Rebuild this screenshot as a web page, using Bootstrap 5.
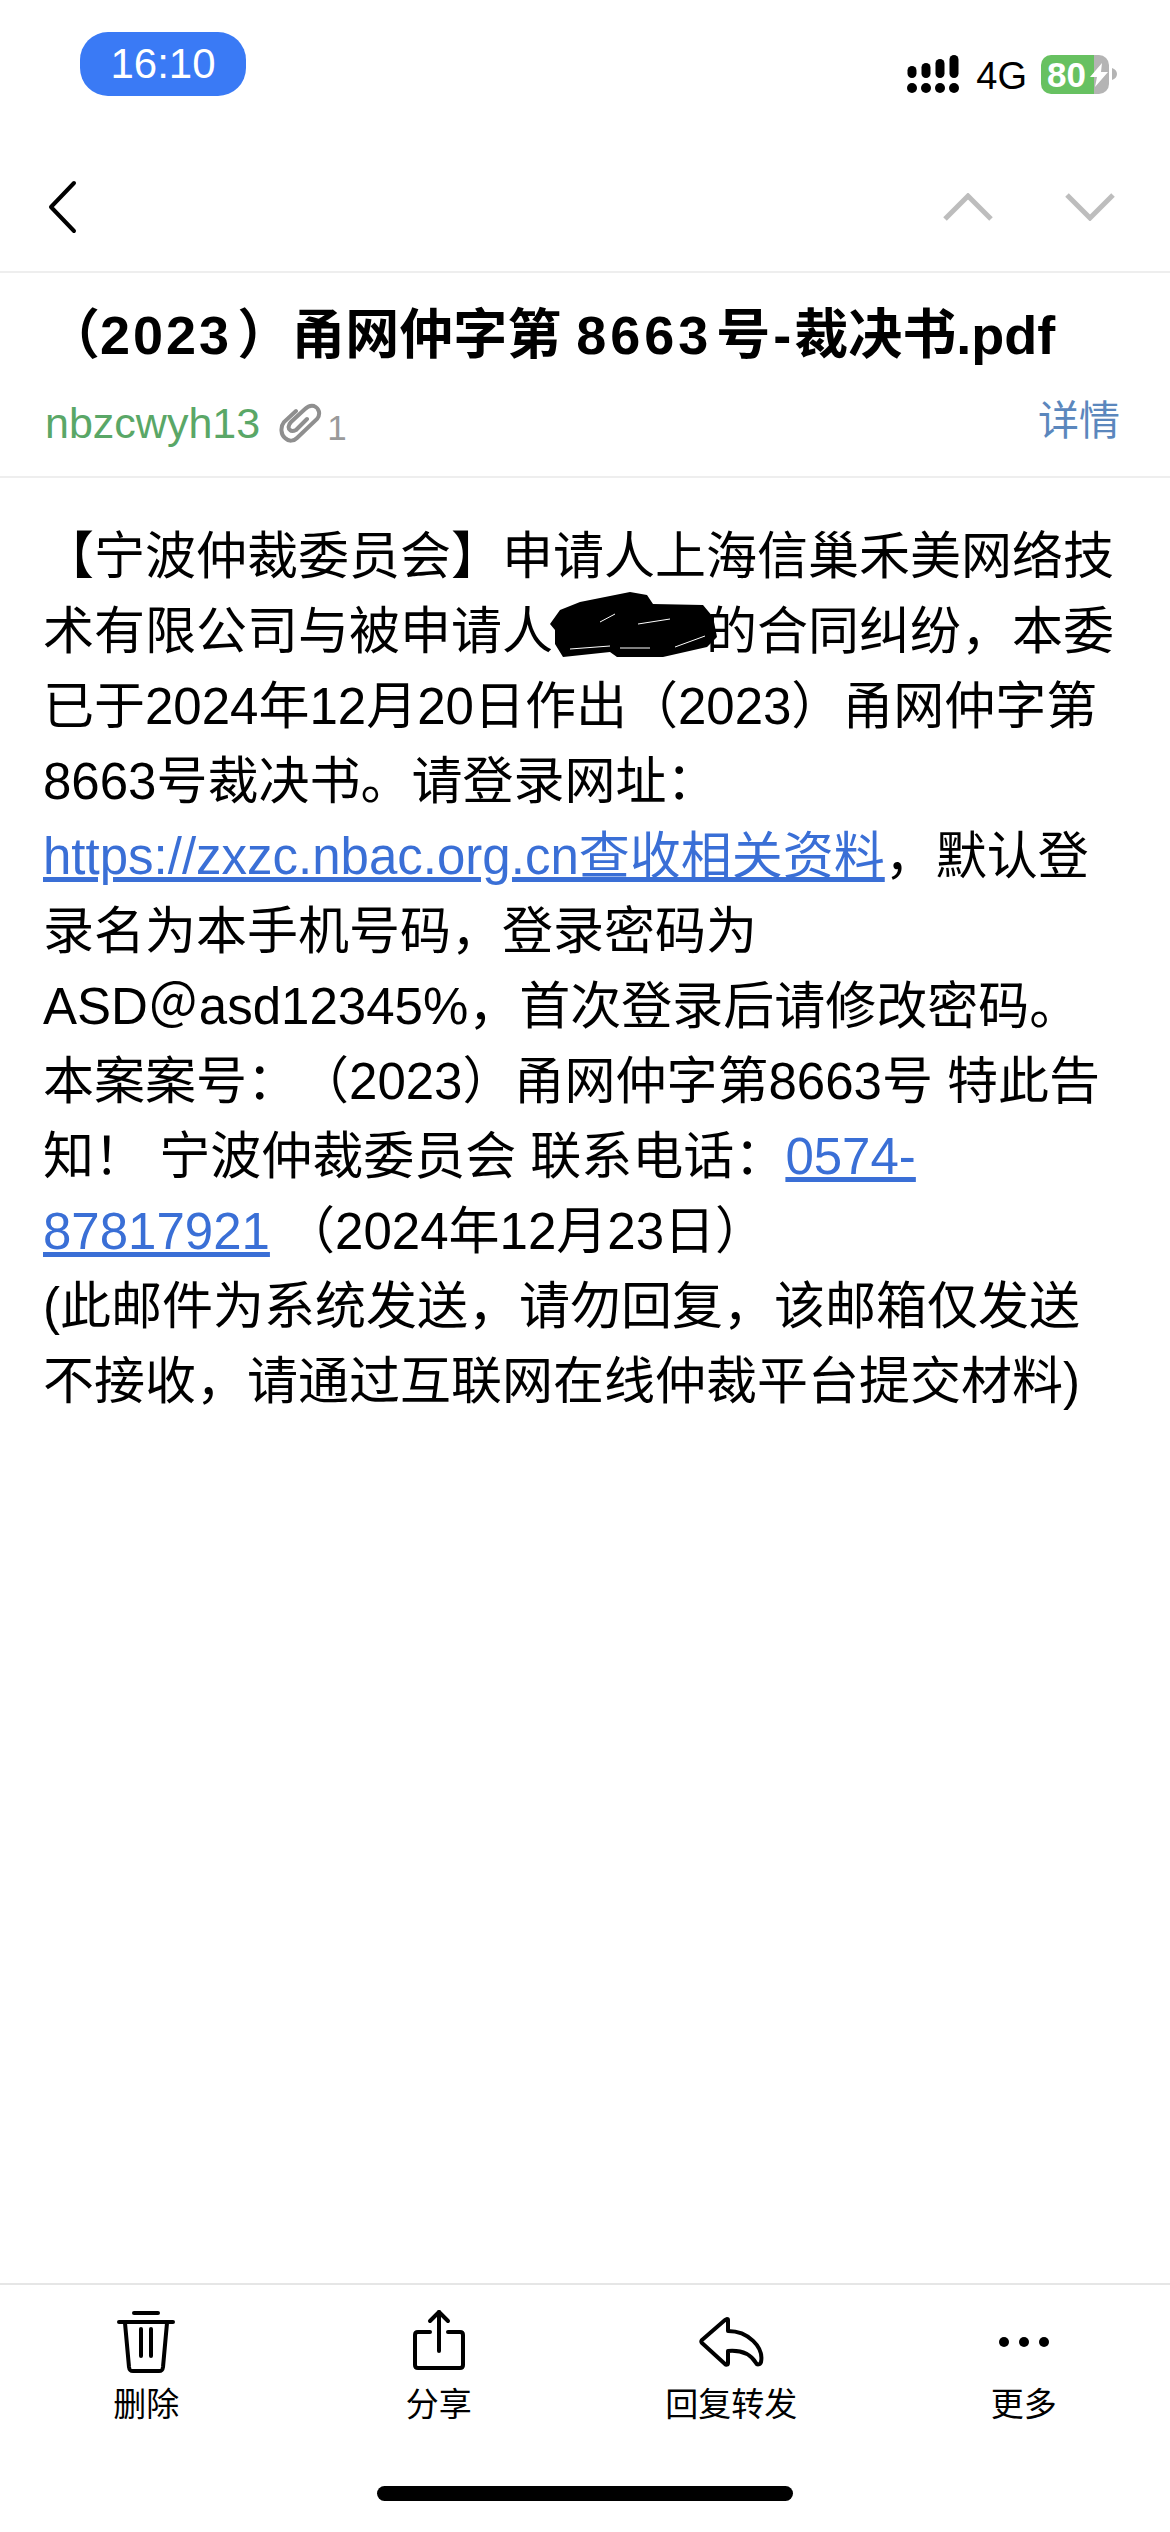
<!DOCTYPE html>
<html lang="zh-CN">
<head>
    <meta charset="UTF-8">
    <meta name="viewport" content="width=device-width, initial-scale=1.0">
    <title>邮件详情</title>
    <link href="https://cdn.jsdelivr.net/npm/bootstrap@5.3.0/dist/css/bootstrap.min.css" rel="stylesheet">
    <style>
        html, body {
            width: 1170px;
            height: 2532px;
            overflow: hidden;
        }
        body {
            background-color: #fff;
            color: #000;
            font-family: "Liberation Sans", "Noto Sans CJK SC", sans-serif;
            text-spacing-trim: space-all;
        }
        .screen {
            height: 2532px;
        }
        /* barra de estado */
        .status-row {
            height: 100px;
            padding: 32px 53px 0 80px;
        }
        .time-pill {
            width: 166px;
            height: 64px;
            border-radius: 28px;
            background-color: #3a7af5;
            color: #fff;
            font-size: 42px;
            line-height: 64px;
            text-align: center;
        }
        .status-right {
            margin-top: 22px;
            height: 40px;
        }
        .net-label {
            font-size: 38px;
            line-height: 40px;
            margin: 0 14px 0 17px;
            padding-top: 4px;
        }
        .battery {
            position: relative;
            width: 68px;
            height: 39px;
            border-radius: 10px;
            overflow: hidden;
            background: linear-gradient(90deg, #67c161 0, #67c161 78%, #b4b4b4 78%);
            color: #fff;
            font-size: 35px;
            font-weight: 700;
            line-height: 39px;
            padding-left: 6px;
        }
        .battery svg {
            position: absolute;
            left: 49px;
            top: 8px;
        }
        .battery-nub {
            margin-left: 3px;
        }
        .nav-row {
            height: 173px;
            border-bottom: 2px solid #eeeeee;
            padding: 42px 55px 0 48px;
        }
        .subject {
            font-size: 54px;
            font-weight: 700;
            line-height: 62px;
            padding: 31px 0 0 46px;
            white-space: nowrap;
        }
        .subject-year {
            letter-spacing: 3px;
            margin-right: 5px;
        }
        .subject-num {
            letter-spacing: 4px;
            margin: 0 4px 0 15px;
        }
        .subject-dash {
            margin: 0 3px;
        }
        .meta-row {
            height: 112px;
            padding: 29px 50px 0 45px;
            border-bottom: 2px solid #eeeeee;
        }
        .sender {
            color: #5aa767;
            font-size: 43px;
            line-height: 56px;
        }
        .clip-icon {
            margin: 8px 4px 0 19px;
        }
        .clip-count {
            color: #9a9a9a;
            font-size: 35px;
            line-height: 36px;
            margin-top: 15px;
        }
        .detail-link {
            color: #5b87bd;
            font-size: 41px;
            line-height: 50px;
            text-decoration: none;
            margin-top: 1px;
        }
        .mail-text {
            font-size: 51px;
            line-height: 75px;
            padding: 41px 0 0 43px;
            white-space: nowrap;
        }
        .mail-text a {
            color: #3a6fd6;
        }
        .punct-mid {
            font-family: "Noto Sans CJK TC", sans-serif;
            line-height: 0;
        }
        .scribble-slot {
            position: relative;
            display: inline-block;
            width: 153px;
            height: 1em;
        }
        .scribble-slot svg {
            position: absolute;
            left: -3px;
            top: -6px;
        }
        .tool-bar {
            border-top: 2px solid #e6e6e6;
            height: 249px;
            padding-top: 24px;
        }
        .tool-item {
            font-size: 33px;
            line-height: 40px;
            text-align: center;
        }
        .tool-item svg {
            display: block;
            margin: 0 auto 12px;
        }
        .home-bar {
            width: 416px;
            height: 15px;
            border-radius: 8px;
            background-color: #000;
            margin: 61px auto 0;
        }
    </style>
</head>
<body>
    <div class="screen d-flex flex-column">
        <!-- Barra de estado -->
        <div class="status-row d-flex justify-content-between align-items-start">
            <div class="time-pill">16:10</div>
            <div class="status-right d-flex align-items-center">
                <svg width="52" height="38" viewBox="0 0 52 38" fill="#000">
                    <circle cx="5" cy="33" r="5"/><circle cx="19" cy="33" r="5"/><circle cx="33" cy="33" r="5"/><circle cx="47" cy="33" r="5"/>
                    <rect x="0.5" y="11" width="9" height="12" rx="4.5"/><rect x="14.5" y="8" width="9" height="15" rx="4.5"/><rect x="28.5" y="4" width="9" height="19" rx="4.5"/><rect x="42.5" y="0" width="9" height="23" rx="4.5"/>
                </svg>
                <span class="net-label">4G</span>
                <div class="battery">80
                    <svg width="18" height="24" viewBox="0 0 18 24"><path d="M12 0 0 14h7l-2 10 13-15h-7z" fill="#fff"/></svg>
                </div>
                <svg class="battery-nub" width="5" height="12" viewBox="0 0 5 12"><path d="M0 0c3 1 5 3 5 6s-2 5-5 6z" fill="#b4b4b4"/></svg>
            </div>
        </div>

        <!-- Navegacion -->
        <div class="nav-row d-flex justify-content-between align-items-center">
            <svg width="30" height="54" viewBox="0 0 30 54" fill="none" stroke="#000" stroke-width="4" stroke-linecap="round" stroke-linejoin="round"><path d="M26 3 3 27l23 24"/></svg>
            <div class="d-flex gap-5 align-items-center">
                <svg width="50" height="28" viewBox="0 0 50 28" fill="none" stroke="#bdbdbd" stroke-width="5"><path d="M2 26 25 3l23 23"/></svg>
                <svg class="ms-4" width="50" height="28" viewBox="0 0 50 28" fill="none" stroke="#bdbdbd" stroke-width="5"><path d="M2 2l23 23L48 2"/></svg>
            </div>
        </div>

        <!-- Asunto -->
        <div class="subject">（<span class="subject-year">2023</span>）甬网仲字第<span class="subject-num">8663</span>号<span class="subject-dash">-</span>裁决书.pdf</div>
        <div class="meta-row d-flex justify-content-between align-items-start">
            <div class="d-flex align-items-start">
                <span class="sender">nbzcwyh13</span>
                <svg class="clip-icon" width="44" height="42" viewBox="-2 -2 44 42" fill="none" stroke="#8f8f8f" stroke-width="4" stroke-linecap="round"><path d="M15 6 3 17C-1 22 0 30 4 33c4 4 9 3 12 0l20-19c4-5 2-11-3-13-4-1-7 1-9 3L10 17c-3 3-3 7-1 8 2 2 4 1 6 0l11-11"/></svg>
                <span class="clip-count">1</span>
            </div>
            <a class="detail-link" href="#">详情</a>
        </div>

        <!-- Cuerpo -->
        <div class="mail-text flex-grow-1">
            【宁波仲裁委员会】申请人上海信巢禾美网络技<br>
            术有限公司与被申请人<span class="scribble-slot"><svg width="170" height="68" viewBox="0 0 170 68"><path d="M0 32 10 18l20-8L80 0l17 3 6 9 50 1 10 12 4 20-10 10-44 10H67l-7-5-47 5-8-13v-14z" fill="#000"/><path d="M20 57 60 54M70 56h30M50 30l15-8M88 32l32-5M125 55l30-11" fill="none" stroke="#fff" stroke-width="1"/></svg></span>的合同纠纷，本委<br>
            已于2024年12月20日作出（2023）甬网仲字第<br>
            8663号裁决书。请登录网址<span class="punct-mid">：</span><br>
            <a href="#">https://zxzc.nbac.org.cn查收相关资料</a>，默认登<br>
            录名为本手机号码，登录密码为<br>
            ASD＠asd12345%，首次登录后请修改密码。<br>
            本案案号<span class="punct-mid">：</span>（2023）甬网仲字第8663号 特此告<br>
            知<span class="punct-mid">！</span> 宁波仲裁委员会 联系电话<span class="punct-mid">：</span><a href="#">0574-</a><br>
            <a href="#">87817921</a> （2024年12月23日）<br>
            (此邮件为系统发送，请勿回复，该邮箱仅发送<br>
            不接收，请通过互联网在线仲裁平台提交材料)
        </div>

        <!-- Barra inferior -->
        <div class="tool-bar">
            <div class="row g-0">
                <div class="col-3 tool-item">
                    <svg width="60" height="64" viewBox="0 0 60 64" fill="none" stroke="#000" stroke-width="4" stroke-linecap="round"><path d="M18 4h24"/><path d="M3 13h54"/><path d="M9 14l4 44c.5 4 2 4 4 4h26c2 0 3.500 0 4-4l4-44"/><path d="M25 20v27M35 20v27"/></svg>
                    删除
                </div>
                <div class="col-3 tool-item">
                    <svg width="60" height="64" viewBox="0 0 60 64" fill="none" stroke="#000" stroke-width="4" stroke-linecap="round" stroke-linejoin="round"><path d="M30 3v39"/><path d="M21 12l9-9 9 9"/><path d="M21 23H9q-3 0-3 3v30q0 3 3 3h42q3 0 3-3V26q0-3-3-3H39"/></svg>
                    分享
                </div>
                <div class="col-3 tool-item">
                    <svg width="66" height="64" viewBox="0 0 66 64" fill="none" stroke="#000" stroke-width="4" stroke-linejoin="round"><path d="M29 10c1 0 1 1 1 1v11c20 0 36 16 33 31-1 3-4 3-5 1-6-10-16-13-28-12v12c0 2-2 2-3 1L4 34c-1-1-1-2 0-3l23-20z"/></svg>
                    回复转发
                </div>
                <div class="col-3 tool-item">
                    <svg width="60" height="64" viewBox="0 0 60 64" fill="#000"><circle cx="10" cy="33" r="5"/><circle cx="30" cy="33" r="5"/><circle cx="50" cy="33" r="5"/></svg>
                    更多
                </div>
            </div>
            <div class="home-bar"></div>
        </div>
    </div>
    <script src="https://cdn.jsdelivr.net/npm/bootstrap@5.3.0/dist/js/bootstrap.bundle.min.js"></script>
</body>
</html>
